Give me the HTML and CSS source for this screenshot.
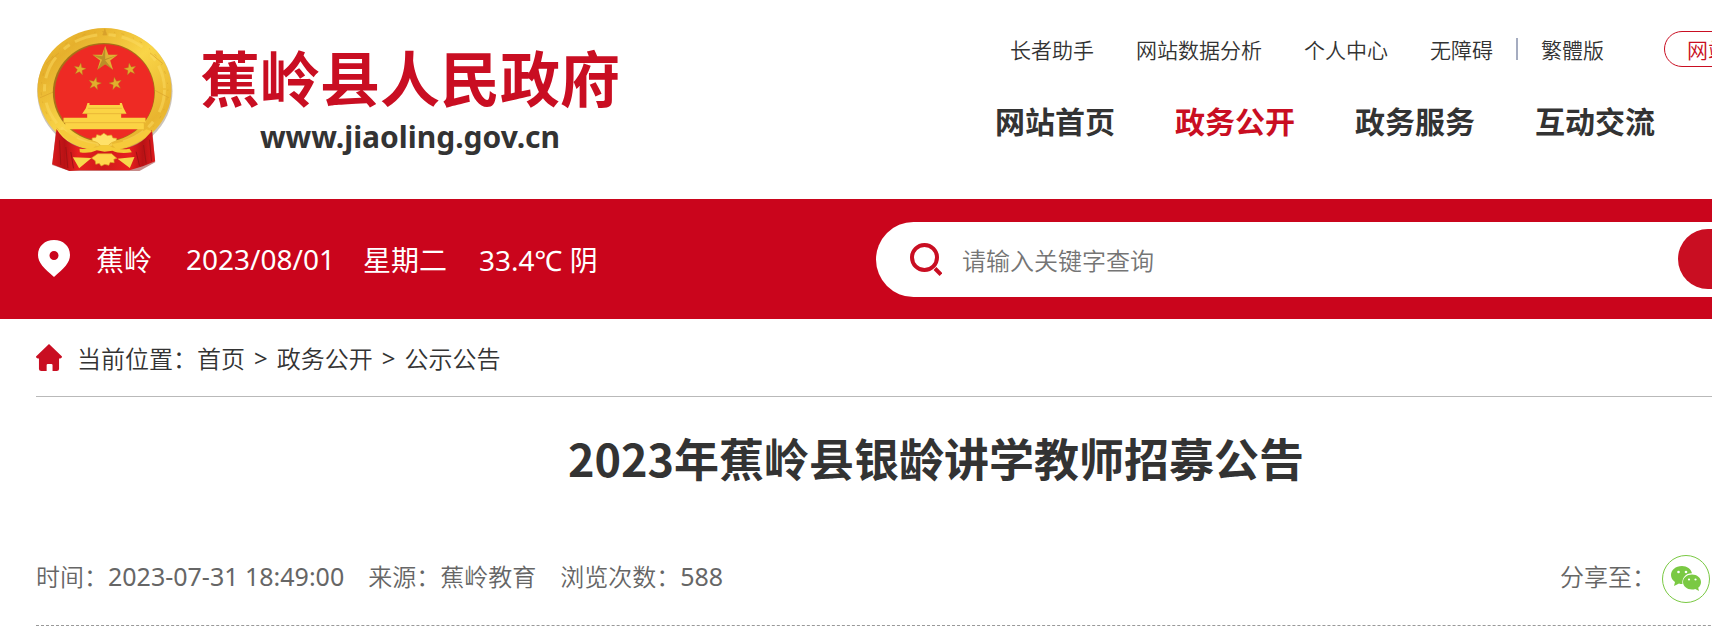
FILE: index.html
```
<!DOCTYPE html>
<html lang="zh-CN">
<head>
    <meta charset="UTF-8">
    <meta name="viewport" content="width=device-width, initial-scale=1.0">
    <title>2023年蕉岭县银龄讲学教师招募公告</title>
    <link rel="stylesheet" href="styles.css">
</head>
<body>
<div class="page">
    <header class="header">
        <div class="logo">
            <svg class="emblem" viewBox="50 50 410 435" role="img" aria-label="国徽">
                <defs>
                    <linearGradient id="gold" x1="0" y1="0" x2="1" y2="1">
                        <stop offset="0" stop-color="#f3c83c"/>
                        <stop offset="0.2" stop-color="#e6b02c"/>
                        <stop offset="0.5" stop-color="#f9d548"/>
                        <stop offset="0.8" stop-color="#e9b52f"/>
                        <stop offset="1" stop-color="#f6cd40"/>
                    </linearGradient>
                    <linearGradient id="drape" x1="0" y1="0" x2="1" y2="0">
                        <stop offset="0" stop-color="#d91a1c"/>
                        <stop offset="0.12" stop-color="#b81215"/>
                        <stop offset="0.25" stop-color="#e8201f"/>
                        <stop offset="0.5" stop-color="#cf191b"/>
                        <stop offset="0.75" stop-color="#e8201f"/>
                        <stop offset="0.88" stop-color="#b81215"/>
                        <stop offset="1" stop-color="#df1b1d"/>
                    </linearGradient>
                    <path id="star" d="M0-10 2.4-3.2 9.5-3.1 3.8 1.2 5.9 8.1 0 4-5.9 8.1-3.8 1.2-9.5-3.1-2.4-3.2Z"/>
                </defs>
                <ellipse cx="256" cy="243" rx="203" ry="188" fill="#8b7b62" opacity="0.45"/>
                <path d="M110 355 98 464 150 482H360L407 456 398 355Z" fill="#8f1c17" opacity="0.5"/>
                <ellipse cx="255" cy="238" rx="201" ry="185" fill="url(#gold)"/>
                <ellipse cx="255" cy="238" rx="180" ry="165" fill="none" stroke="#fbdc62" stroke-width="9" stroke-dasharray="70 34 22 18" opacity="0.5"/>
                <ellipse cx="255" cy="238" rx="190" ry="174" fill="none" stroke="#cf9928" stroke-width="2" stroke-dasharray="4 19 9 27" opacity="0.6"/>
                <path d="M80 160 118 128M62 262 104 244M392 128 430 160M406 240 448 262M256 56 250 74 262 74Z" fill="#d9a22b" stroke="#d9a22b" stroke-width="2"/>
                <ellipse cx="253" cy="246" rx="153" ry="148" fill="#a77218"/>
                <ellipse cx="255" cy="247" rx="149" ry="145" fill="#ee2a24"/>
                <use href="#star" transform="translate(257 146) scale(4)" fill="#e0b133"/>
                <path d="M257 106V146L295 134 257 150 280 178 257 162 234 178 248 148 219 134 249 138Z" fill="#8d681b" opacity="0.45"/>
                <g fill="#e2ae2c" stroke="#a87a20" stroke-width="0.5">
                    <use href="#star" transform="translate(181 177) rotate(10) scale(1.9)"/>
                    <use href="#star" transform="translate(332 177) rotate(-10) scale(1.9)"/>
                    <use href="#star" transform="translate(226 220) rotate(12) scale(2)"/>
                    <use href="#star" transform="translate(288 220) rotate(-12) scale(2)"/>
                </g>
                <path d="M204 278H210V284H301V278H307L312 293 321 310H305V322H378V337H373V357H137V337H132V322H203V310H188L199 294Z" fill="#fbd344"/>
                <path d="M205 294H307M193 310H317M134 337H377" fill="none" stroke="#e3aa30" stroke-width="2"/>
                <path d="M111 356Q145 413 220 418H290Q365 413 397 359L407 453 370 468 330 480H180L150 482 98 462Z" fill="url(#drape)"/>
                <path d="M115 360Q152 405 217 418L232 402Q175 396 133 358ZM397 363Q354 409 291 418L277 402Q340 391 380 357Z" fill="#f6ca3b"/>
                <path d="M120 390 124 464M139 410 145 473M154 425 162 474M390 388 396 453M372 404 380 459M350 424 360 466" stroke="#a01214" stroke-width="3"/>
                <path d="M218 383 229 382 232 373 243 376 253 369 264 376 276 374 280 383 291 384 290 392Q274 395 266 406H244Q236 395 218 391Z" fill="#ffe169" stroke="#e0ae2c" stroke-width="2"/>
                <path d="M180 415Q220 420 244 405H267Q293 421 330 415L337 426Q298 431 279 421L255 424 232 420Q208 431 181 426Z" fill="#f5cb37"/>
                <path d="M160 441 216 443 179 474ZM294 445 345 440 331 473Z" fill="#f7d84c"/>
                <path d="M216 443 235 430H276L292 444 283 447 284 457 272 456 268 465 256 462 245 467 239 459 229 462 227 451Z" fill="#ffd84c" stroke="#dc9c24" stroke-width="2"/>
            </svg>
            <div class="site">
                <h1 class="site-name">蕉岭县人民政府</h1>
                <p class="site-url">www.jiaoling.gov.cn</p>
            </div>
        </div>
        <div class="header-right">
            <div class="top-links">
                <a href="#">长者助手</a>
                <a href="#">网站数据分析</a>
                <a href="#">个人中心</a>
                <div class="lang">
                    <a href="#">无障碍</a>
                    <span class="divider"></span>
                    <a href="#">繁體版</a>
                </div>
                <a class="site-support" href="#">网站</a>
            </div>
            <nav class="nav">
                <a href="#">网站首页</a>
                <a class="active" href="#">政务公开</a>
                <a href="#">政务服务</a>
                <a href="#">互动交流</a>
            </nav>
        </div>
    </header>

    <div class="bar">
        <div class="weather">
            <svg class="pin" viewBox="0 0 32 44" aria-hidden="true">
                <path fill="#fff" fill-rule="evenodd" d="M16 3C7 3 0 9 0 18c0 8 6 13 16 22 10-9 16-14 16-22C32 9 25 3 16 3Zm0 11a4.500 4.500 0 1 1 0 9 4.500 4.500 0 0 1 0-9Z"/>
            </svg>
            <span class="city">蕉岭</span>
            <span class="date">2023/08/01</span>
            <span class="week">星期二</span>
            <span>33.4℃ 阴</span>
        </div>
        <form class="search">
            <svg class="search-icon" viewBox="0 0 32 33" aria-hidden="true">
                <circle cx="14.500" cy="14.500" r="12.500" fill="none" stroke="#c90e22" stroke-width="4"/>
                <path d="M25 25.500 31 31.500" stroke="#c90e22" stroke-width="4"/>
            </svg>
            <input class="search-input" type="text" placeholder="请输入关键字查询" aria-label="请输入关键字查询">
            <button class="search-btn" type="button" aria-label="搜索"></button>
        </form>
    </div>

    <main class="main">
        <div class="crumbs">
            <svg class="home" viewBox="0 0 22 28" preserveAspectRatio="none" aria-hidden="true">
                <path fill="#c90e22" d="M11 0 22 12.500C22 14 21 14.500 19.500 14.500V25q0 2-2 2H14V21Q14 20 13 20H10Q9 20 9 21V27H4.500q-2 0-2-2V14.500C1 14.500 0 14 0 12.500Z"/>
            </svg>
            <span>当前位置：</span>
            <a href="#">首页</a>
            <span class="sep">&gt;</span>
            <a href="#">政务公开</a>
            <span class="sep">&gt;</span>
            <a href="#">公示公告</a>
        </div>
        <h2 class="title">2023年蕉岭县银龄讲学教师招募公告</h2>
        <div class="meta">
            <span>时间：<span class="num">2023-07-31 18:49:00</span></span>
            <span>来源：蕉岭教育</span>
            <span>浏览次数：<span class="num">588</span></span>
            <div class="share">
                <span>分享至：</span>
                <a class="wechat" href="#" aria-label="微信">
                    <svg viewBox="0 0 30 25" aria-hidden="true">
                        <path fill="#7ac943" d="M11 0C4.500 0 0 4 0 9c0 3 1.500 5 4 7L3 20l5-2.500c1 .4 2 .5 3.500.5C10.500 12 15 7 21 7.200 20 3 16 0 11 0Z"/>
                        <path fill="#7ac943" d="M21 8.500c-5 0-9 3.200-9 7.500s4 7.500 9 7.500c1.200 0 2.400-.2 3.300-.6L28 25l-.8-3.200c1.700-1.300 2.800-3.300 2.800-5.800 0-4.300-4-7.500-9-7.500Z"/>
                        <g fill="#fff"><circle cx="7.500" cy="6" r="1.300"/><circle cx="15" cy="6" r="1.300"/><circle cx="18" cy="13.500" r="1.100"/><circle cx="24.500" cy="13.500" r="1.100"/></g>
                    </svg>
                </a>
            </div>
        </div>
    </main>
</div>
</body>
</html>
```
FILE: styles.css
```
* {
    box-sizing: border-box;
}

body {
    margin: 0;
    overflow: hidden;
    background-color: #fff;
    color: #333;
    font-family: "Noto Sans", "Noto Sans CJK SC", sans-serif;
}

a {
    color: inherit;
    text-decoration: none;
}

/* The layout runs wider than the window */
.page {
    width: calc(100% + 160px);
}

/* Header */
.header {
    display: flex;
    justify-content: space-between;
    padding: 27px 36px;
}

.logo {
    display: flex;
    gap: 27px;
}

.emblem {
    width: 137px;
    height: 145px;
}

.site {
    padding-top: 8px;
    text-align: center;
}

.site-name {
    margin: 0;
    color: #c90e22;
    font-family: "Noto Sans CJK SC", sans-serif;
    font-size: 60px;
    line-height: 82px;
}

.site-url {
    margin: 0;
    font-size: 30px;
    font-weight: bold;
    line-height: 40px;
}

.header-right {
    width: 841px;
}

.top-links {
    display: flex;
    align-items: center;
    gap: 42px;
    padding: 4px 0 0 15px;
    font-size: 21px;
    font-weight: 350;
    line-height: 36px;
}

.top-links,
.nav,
.title {
    font-family: "Noto Sans CJK SC", sans-serif;
}

.lang {
    display: flex;
    align-items: center;
    gap: 23px;
    margin-right: 18px;
}

.divider {
    width: 2px;
    height: 22px;
    background-color: #a5acc0;
}

.site-support {
    flex: 1;
    height: 36px;
    padding-left: 22px;
    border: 1px solid #c90e22;
    border-radius: 18px;
    color: #c90e22;
    line-height: 34px;
}

.nav {
    display: flex;
    gap: 60px;
    padding-top: 31px;
    font-size: 30px;
    font-weight: bold;
    line-height: 44px;
}

.nav .active {
    color: #c90e22;
}

/* Red bar with the weather and the search */
.bar {
    display: flex;
    justify-content: space-between;
    align-items: center;
    height: 120px;
    padding: 0 36px;
    background-color: #ca051c;
}

.weather {
    display: flex;
    align-items: center;
    padding-left: 2px;
    color: #fff;
    font-size: 28px;
}

.pin {
    width: 32px;
    height: 44px;
    margin-right: 26px;
}

.city {
    margin-right: 34px;
}

.date {
    margin-right: 28px;
}

.week {
    margin-right: 32px;
}

.search {
    display: flex;
    align-items: center;
    width: 960px;
    height: 75px;
    padding: 0 8px 0 34px;
    border-radius: 38px;
    background-color: #fff;
}

.search-icon {
    width: 32px;
    height: 33px;
}

.search-input {
    flex: 1;
    min-width: 0;
    padding: 0 20px;
    border: 0;
    outline: 0;
    background: none;
    font-family: "Noto Sans CJK SC", sans-serif;
    font-size: 24px;
    font-weight: 350;
}

.search-input::placeholder {
    color: #757575;
}

.search-btn {
    width: 150px;
    height: 60px;
    border: 0;
    border-radius: 30px;
    background-color: #c90e22;
}

/* Article */
.main {
    padding: 0 36px;
}

.crumbs {
    display: flex;
    align-items: center;
    height: 78px;
    border-bottom: 1px solid #b9b9b9;
    font-size: 24px;
    font-weight: 350;
}

.home {
    width: 26px;
    height: 28px;
    margin-right: 15px;
}

.sep {
    margin: 0 9px;
    font-weight: 400;
}

.title {
    margin: 27px 0 0;
    font-size: 45px;
    line-height: 68px;
    text-align: center;
}

.meta {
    display: flex;
    align-items: center;
    gap: 24px;
    height: 100px;
    margin-top: 34px;
    border-bottom: 1px dashed #999;
    color: #666;
    font-size: 24px;
    font-weight: 350;
}

.num {
    font-size: 25px;
    font-weight: 400;
}

.share {
    display: flex;
    align-items: center;
    gap: 6px;
    width: 276px;
    margin-left: auto;
}

.wechat {
    display: flex;
    align-items: center;
    justify-content: center;
    width: 48px;
    height: 48px;
    margin-top: 6px;
    border: 1px solid #7ac943;
    border-radius: 50%;
}

.wechat svg {
    width: 30px;
    height: 25px;
}
```
